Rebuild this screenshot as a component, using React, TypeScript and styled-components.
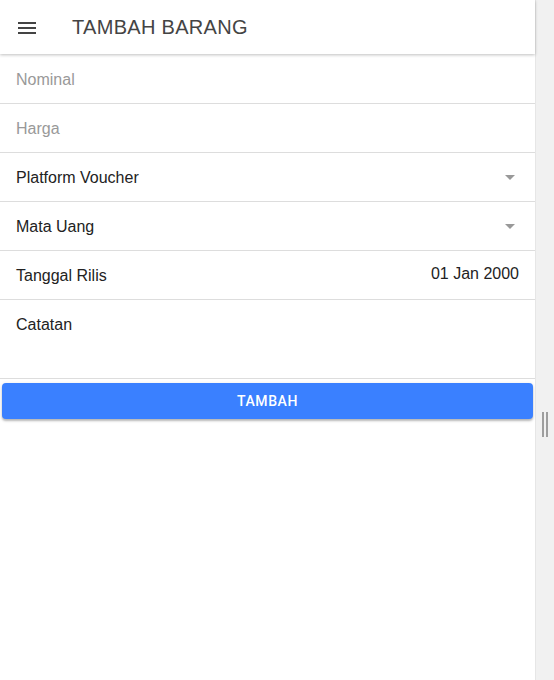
import React from 'react';
import styled, { createGlobalStyle } from 'styled-components';

const GlobalStyle = createGlobalStyle`
  html, body {
    margin: 0;
    padding: 0;
    height: 100%;
    background: #ffffff;
  }
  body {
    font-family: 'Liberation Sans', Arial, sans-serif;
  }
`;

const Page = styled.div`
  display: flex;
  width: 100%;
  height: 100vh;
  overflow: hidden;
`;

const Main = styled.div`
  flex: 1;
  display: flex;
  flex-direction: column;
  background: #ffffff;
`;

const Header = styled.div`
  height: 54px;
  display: flex;
  align-items: center;
  padding-left: 15px;
  box-shadow: 0 1px 3px rgba(0, 0, 0, 0.25);
  position: relative;
  z-index: 1;
`;

const MenuButton = styled.div`
  width: 24px;
  height: 24px;
  display: flex;
  align-items: center;
  justify-content: center;
  margin-top: 1px;
  svg {
    display: block;
  }
`;

const Title = styled.h1`
  margin: 0 0 0 33px;
  font-size: 20px;
  font-weight: 400;
  color: #444444;
  letter-spacing: 0.3px;
`;

const Form = styled.div`
  display: flex;
  flex-direction: column;
  padding-top: 1px;
`;

interface RowProps {
  tall?: boolean;
}

const Row = styled.div<RowProps>`
  height: ${(p) => (p.tall ? '79px' : '49px')};
  border-bottom: 1px solid #dddddd;
  display: flex;
  align-items: ${(p) => (p.tall ? 'flex-start' : 'center')};
  justify-content: space-between;
  padding: ${(p) => (p.tall ? '15px 16px 0 16px' : '0 16px')};
  box-sizing: border-box;
`;

interface LabelProps {
  placeholder?: boolean;
}

const Label = styled.span<LabelProps>`
  font-size: 16px;
  color: ${(p) => (p.placeholder ? '#999999' : '#222222')};
  margin-top: 1px;
`;

const Value = styled.span`
  font-size: 16px;
  color: #222222;
  margin-top: -2px;
`;

const Caret = styled.span`
  width: 0;
  height: 0;
  border-left: 5px solid transparent;
  border-right: 5px solid transparent;
  border-top: 5px solid #999999;
  margin-right: 4px;
`;

const SubmitButton = styled.button`
  margin: 4px 2px 0 2px;
  height: 36px;
  border: none;
  border-radius: 4px;
  background: #3a80ff;
  color: #ffffff;
  font-family: Roboto, 'Liberation Sans', Arial, sans-serif;
  font-size: 14px;
  font-weight: 500;
  letter-spacing: 0.6px;
  text-transform: uppercase;
  box-shadow: 0 2px 2px rgba(0, 0, 0, 0.22), 0 1px 4px rgba(0, 0, 0, 0.12);
  cursor: pointer;
`;

const SideStrip = styled.div`
  width: 19px;
  background: #f1f1f1;
  border-left: 1px solid #e6e6e6;
  display: flex;
  justify-content: center;
  padding-top: 412px;
  box-sizing: border-box;
`;

const Handle = styled.div`
  width: 6px;
  height: 25px;
  border-left: 2px solid #9e9e9e;
  border-right: 2px solid #9e9e9e;
  box-sizing: border-box;
  margin-left: -1px;
`;

function MenuIcon() {
  return (
    <svg width="24" height="24" viewBox="0 0 24 24" fill="#444444">
      <path d="M3 18h18v-2H3v2zm0-5h18v-2H3v2zm0-7v2h18V6H3z" />
    </svg>
  );
}

function App() {
  return (
    <Page>
      <GlobalStyle />
      <Main>
        <Header>
          <MenuButton>
            <MenuIcon />
          </MenuButton>
          <Title>TAMBAH BARANG</Title>
        </Header>
        <Form>
          <Row>
            <Label placeholder>Nominal</Label>
          </Row>
          <Row>
            <Label placeholder>Harga</Label>
          </Row>
          <Row>
            <Label>Platform Voucher</Label>
            <Caret />
          </Row>
          <Row>
            <Label>Mata Uang</Label>
            <Caret />
          </Row>
          <Row>
            <Label>Tanggal Rilis</Label>
            <Value>01 Jan 2000</Value>
          </Row>
          <Row tall>
            <Label>Catatan</Label>
          </Row>
          <SubmitButton>Tambah</SubmitButton>
        </Form>
      </Main>
      <SideStrip>
        <Handle />
      </SideStrip>
    </Page>
  );
}

export default App;
